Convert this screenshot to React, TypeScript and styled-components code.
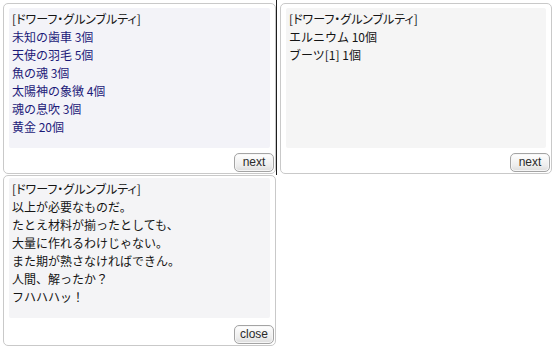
import styled, { createGlobalStyle } from 'styled-components';

const GlobalStyle = createGlobalStyle`
  html, body {
    margin: 0;
    padding: 0;
    background: #ffffff;
  }
  body {
    font-family: "Noto Sans CJK JP", "Noto Sans", sans-serif;
  }
`;

const StyledPage = styled.div`
  width: 553px;
  height: 347px;
  display: grid;
  grid-template-columns: 276px 1px 276px;
  grid-template-rows: 175px 172px;
  overflow: hidden;
  background: #ffffff;

  .page-bottom {
    grid-column: 1 / 2;
  }
`;

const Divider = styled.div`
  background: #1e1e1e;
  width: 1px;
  height: 175px;
`;

const Window = styled.div<{ $top: number; $right: number; $height?: number; $inset: number }>`
  margin: ${(p) => p.$top}px ${(p) => p.$right}px 1px 3px;
  height: ${(p) => (p.$height ? `${p.$height}px` : 'auto')};
  border: 1px solid #c9c9c9;
  border-radius: 5px;
  background: #ffffff;
  display: flex;
  flex-direction: column;
  padding: ${(p) => p.$inset}px 5px 0 5px;
  box-sizing: border-box;
`;

const Panel = styled.div<{ $tint: string }>`
  height: 140px;
  background: ${(p) => p.$tint};
  border-radius: 2px;
  padding: 2px 3px;
  box-sizing: border-box;
  font-size: 12px;
  line-height: 18px;
  color: #111111;
  white-space: nowrap;
`;

const Line = styled.div<{ $item?: boolean }>`
  color: ${(p) => (p.$item ? '#1c1a78' : '#141414')};
`;

const Title = styled(Line)`
  font-feature-settings: "palt";
`;

const Footer = styled.div`
  flex: 1;
  display: flex;
  justify-content: flex-end;
  align-items: flex-end;
  margin-right: -4px;
  padding-bottom: 1px;
`;

const Button = styled.button`
  width: 40px;
  height: 19px;
  padding: 0 0 1px;
  border: 1px solid #a4a4a4;
  border-radius: 5px;
  background: linear-gradient(#ffffff, #ececec 70%, #dcdcdc);
  box-shadow: inset 0 0 0 1px #f6f6f6;
  font-family: "Liberation Sans", Arial, sans-serif;
  font-size: 12px;
  line-height: 16px;
  color: #2a2a2a;
  cursor: pointer;
`;

const TITLE = '[ドワーフ・グルンブルティ]';

const materials = ['未知の歯車 3個', '天使の羽毛 5個', '魚の魂 3個', '太陽神の象徴 4個', '魂の息吹 3個', '黄金 20個'];
const extras = ['エルニウム 10個', 'ブーツ[1] 1個'];
const speech = [
  '以上が必要なものだ。',
  'たとえ材料が揃ったとしても、',
  '大量に作れるわけじゃない。',
  'また期が熟さなければできん。',
  '人間、解ったか？',
  'フハハハッ！',
];

function App() {
  return (
    <StyledPage>
      <GlobalStyle />
      <Window $top={3} $right={0} $inset={4}>
        <Panel $tint="#f3f3f8">
          <Title>{TITLE}</Title>
          {materials.map((m) => (
            <Line key={m} $item>
              {m}
            </Line>
          ))}
        </Panel>
        <Footer>
          <Button>next</Button>
        </Footer>
      </Window>
      <Divider />
      <Window $top={3} $right={1} $inset={4}>
        <Panel $tint="#f5f5f5">
          <Title>{TITLE}</Title>
          {extras.map((m) => (
            <Line key={m}>{m}</Line>
          ))}
        </Panel>
        <Footer>
          <Button>next</Button>
        </Footer>
      </Window>
      <div className="page-bottom">
        <Window $top={0} $right={0} $height={171} $inset={2}>
          <Panel $tint="#f4f4f6">
            <Title>{TITLE}</Title>
            {speech.map((m) => (
              <Line key={m}>{m}</Line>
            ))}
          </Panel>
          <Footer>
            <Button>close</Button>
          </Footer>
        </Window>
      </div>
    </StyledPage>
  );
}

export default App;
